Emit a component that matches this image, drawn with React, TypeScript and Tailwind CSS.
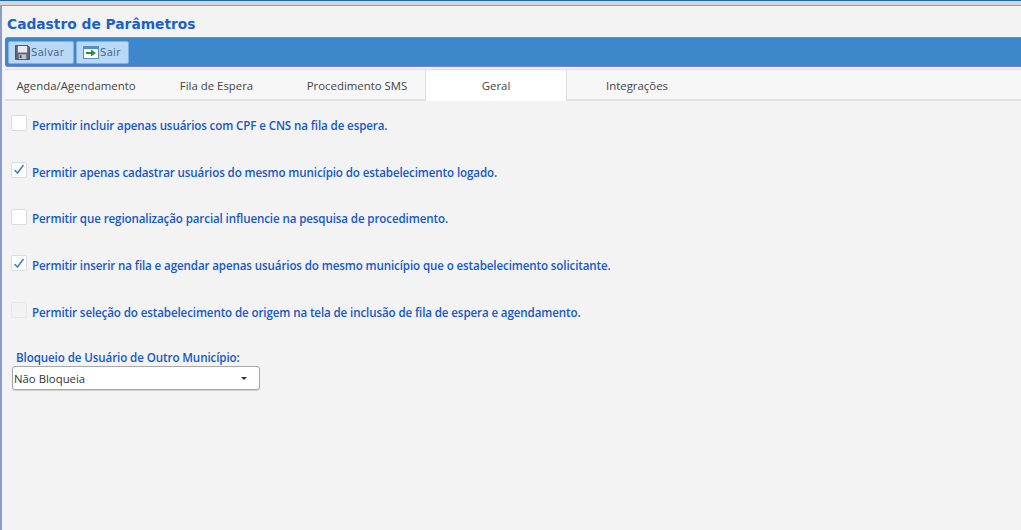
const sans = "font-['Segoe_UI','Open_Sans','Noto_Sans',sans-serif]"

const options = [
  { label: "Permitir incluir apenas usuários com CPF e CNS na fila de espera.", checked: false },
  { label: "Permitir apenas cadastrar usuários do mesmo município do estabelecimento logado.", checked: true },
  { label: "Permitir que regionalização parcial influencie na pesquisa de procedimento.", checked: false },
  { label: "Permitir inserir na fila e agendar apenas usuários do mesmo município que o estabelecimento solicitante.", checked: true },
  { label: "Permitir seleção do estabelecimento de origem na tela de inclusão de fila de espera e agendamento.", checked: false, disabled: true },
]

function SaveIcon() {
  return (
    <svg width="15" height="15" viewBox="0 0 16 16">
      <path d="M0.5 0.5h13l2 2v13h-15z" fill="#5f6670" stroke="#4a4f57" />
      <rect x="3" y="1" width="10" height="7" fill="#e6e9ed" />
      <rect x="4" y="10" width="8" height="5" fill="#bfc5cc" />
      <rect x="5" y="11" width="2" height="3" fill="#4a5058" />
    </svg>
  )
}

function ExitIcon() {
  return (
    <svg width="16" height="13" viewBox="0 0 16 13">
      <rect x="0.5" y="0.5" width="15" height="12" fill="#ffffff" stroke="#5b8fc4" />
      <rect x="1" y="1" width="14" height="2" fill="#4c8fd0" />
      <path d="M3 6h5V3.5l5 3.5-5 3.5V8H3z" fill="#2e8b3a" />
    </svg>
  )
}

function ToolButton({ icon, label, width }: { icon: React.ReactNode; label: string; width: string }) {
  return (
    <button className={`${width} h-[23px] flex items-center pl-[6px] bg-[#b9d8f5] border border-[#7fb2e3] rounded-[2px] font-['Verdana','DejaVu_Sans',sans-serif] text-[10px] text-[#4a6a94] tracking-[0.3px]`}>
      {icon}
      <span className="ml-[1px]">{label}</span>
    </button>
  )
}

function Tab({ label, width, active, extra }: { label: string; width: string; active?: boolean; extra?: string }) {
  return (
    <div
      className={`${width} ${extra ?? ""} flex items-center justify-center text-[11.4px] text-[#444] h-[31px] pt-[1px] ${
        active ? "bg-white border-x border-[#e0e0e0]" : ""
      }`}
    >
      {label}
    </div>
  )
}

function CheckBox({ checked, disabled }: { checked: boolean; disabled?: boolean }) {
  return (
    <span
      className={`w-[16px] h-[16px] shrink-0 flex items-center justify-center rounded-[2px] border ${
        disabled ? "bg-[#f2f2f2] border-[#e8e8e8]" : "bg-white border-[#dcdcdc]"
      }`}
    >
      {checked && (
        <svg width="12" height="11" viewBox="0 0 12 11">
          <path d="M1.5 6l3 3 6-8" fill="none" stroke="#3f7fc4" strokeWidth="1.5" />
        </svg>
      )}
    </span>
  )
}

export default function App() {
  return (
    <div className={`w-[1021px] h-[530px] overflow-hidden bg-[#f3f3f3] ${sans}`}>
      <div className="h-[1px] bg-[#1f6aa5]" />
      <div className="h-[4px] bg-[#d6d6d6]" />
      <div className="h-[525px] border-t border-l-2 border-[#8b9bcc] pl-[3px]">
        <h1 className="h-[31px] pt-[9px] pl-[2px] font-['Verdana','DejaVu_Sans',sans-serif] font-bold text-[13.8px] leading-[18px] text-[#1a62c4]">
          Cadastro de Parâmetros
        </h1>

        <div className="h-[30px] flex items-center gap-[2px] pl-[3px] bg-[#3d88ca] border-y border-[#7d7fe0] rounded-l-[3px]">
          <ToolButton icon={<SaveIcon />} label="Salvar" width="w-[66px]" />
          <ToolButton icon={<ExitIcon />} label="Sair" width="w-[53px]" />
        </div>

        <div className="mt-[2px] h-[32px] flex items-start bg-[#f7f7f7] border-t border-b-2 border-[#e0e0e0]">
          <Tab label="Agenda/Agendamento" width="w-[142px]" />
          <Tab label="Fila de Espera" width="w-[139px]" />
          <Tab label="Procedimento SMS" width="w-[139px]" extra="pl-[3px]" />
          <Tab label="Geral" width="w-[142px]" active />
          <Tab label="Integrações" width="w-[140px]" />
        </div>

        <div className="pt-[14px] pl-[6px] flex flex-col gap-[30.75px]">
          {options.map((o) => (
            <label key={o.label} className="flex items-center gap-[5px] h-[16px]">
              <CheckBox checked={o.checked} disabled={o.disabled} />
              <span className="pt-[5px] text-[11.6px] tracking-[-0.12px] font-semibold text-[#1659c2] whitespace-nowrap">{o.label}</span>
            </label>
          ))}
        </div>

        <div className="mt-[32px] pl-[7px]">
          <div className="pl-[4px] h-[15px] leading-[15px] text-[11.6px] tracking-[-0.1px] font-semibold text-[#1659c2]">
            Bloqueio de Usuário de Outro Município:
          </div>
          <div className="mt-[1px] w-[248px] h-[24px] flex items-center justify-between pl-[1px] pr-[12px] pt-[1px] bg-white border border-[#a8a8a8] rounded-[3px] shadow-[0_1px_1px_rgba(0,0,0,0.15)] text-[11.36px] text-[#333]">
            <span>Não Bloqueia</span>
            <span className="w-0 h-0 border-x-[3px] border-x-transparent border-t-[3px] border-t-[#333]" />
          </div>
        </div>
      </div>
    </div>
  )
}
